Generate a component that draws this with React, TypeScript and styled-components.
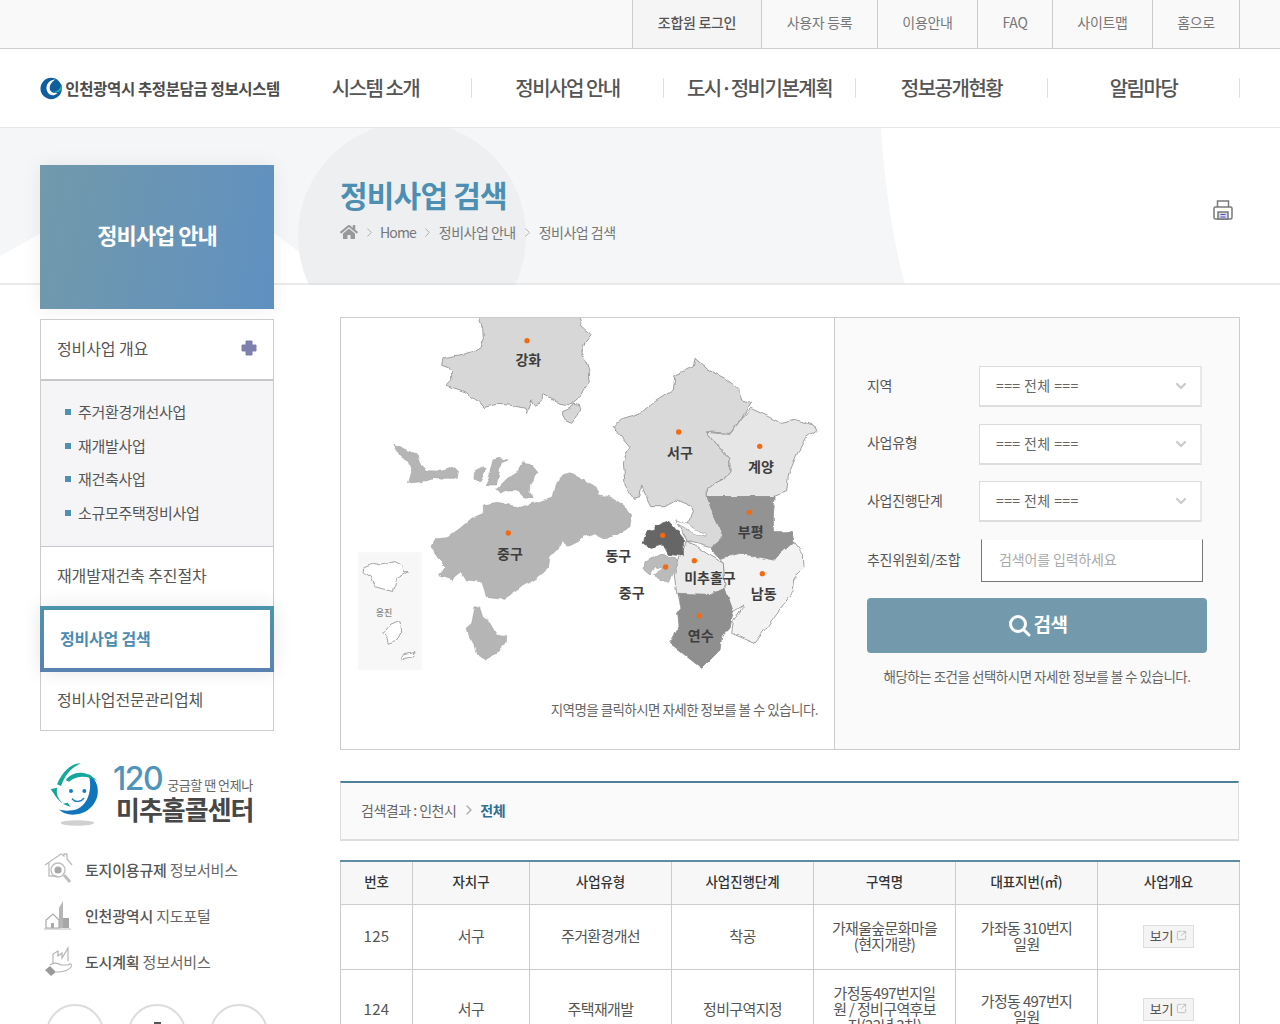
import React from 'react';
import styled, { createGlobalStyle } from 'styled-components';
import { ChevronDown, ChevronRight, SquareArrowOutUpRight } from 'lucide-react';
import { FaHome } from 'react-icons/fa';

const Global = createGlobalStyle`
  html, body { margin: 0; padding: 0; background: #fff; }
  * { box-sizing: border-box; }
  body { font-family: "Noto Sans CJK KR", "Noto Sans", sans-serif; color: #555; }
`;

const Page = styled.div`
  width: 1280px; height: 1024px; overflow: hidden; background: #fff;
`;
const TopBar = styled.div`
  height: 49px; background: #f9f9f9; border-bottom: 1px solid #ccc;
  display: flex; justify-content: flex-end; padding-right: 40px;
`;
const TopLink = styled.a<{ $w: number; $active?: boolean }>`
  width: ${p => p.$w}px; display: flex; align-items: center; justify-content: center; padding-bottom: 4px;
  border-left: 1px solid #ccc; font-size: 14px; letter-spacing: -0.3px;
  color: ${p => (p.$active ? '#555' : '#777')}; font-weight: ${p => (p.$active ? 500 : 400)};
  background: ${p => (p.$active ? '#f5f5f5' : 'transparent')};
  &:last-child { border-right: 1px solid #ccc; }
`;
const Header = styled.div`
  height: 79px; display: flex; align-items: center; padding: 0 40px;
  border-bottom: 1px solid #e8e8e8; background: #fff;
`;
const Brand = styled.div`
  width: 240px; display: flex; align-items: center; gap: 2px; font-size: 15.5px; font-weight: 700;
  letter-spacing: -0.37px; color: #4c4c4c; white-space: nowrap;
`;
const Gnb = styled.nav`
  display: flex; flex: 1;
`;
const GnbItem = styled.a`
  width: 192px; height: 20px; line-height: 20px; text-align: center; font-size: 20px; font-weight: 500;
  letter-spacing: -1.5px; color: #555; border-right: 1px solid #ddd; white-space: nowrap;
`;
const Content = styled.div`
  position: relative; display: flex; gap: 66px; padding: 0 40px;
`;
const Backdrop = styled.svg`
  position: absolute; left: 0; top: 0; width: 1280px; height: 157px; z-index: 0;
`;
const Side = styled.aside`
  position: relative; z-index: 1; width: 234px; flex: none; padding-top: 37px;
`;
const SideTitle = styled.div`
  height: 144px; display: flex; align-items: center; justify-content: center; color: #fff;
  font-size: 22px; font-weight: 700; letter-spacing: -1px; padding-bottom: 7px;
  background: linear-gradient(100deg, #7299ab, #5f90c0);
  box-shadow: 0 0 18px rgba(0, 0, 0, 0.07);
`;
const SideMenu = styled.div`
  margin-top: 10px; border: 1px solid #ccc; background: #fff;
`;
const MenuItem = styled.div`
  height: 59px; display: flex; align-items: center; justify-content: space-between; padding: 0 16px 4px;
  font-size: 16px; letter-spacing: -0.1px; color: #555;
`;
const LastItem = styled(MenuItem)`
  height: 58px; padding-bottom: 4px;
`;
const SubList = styled.ul`
  list-style: none; margin: 0; padding: 14px 24px 17px; background: #f5f5f7;
  border-top: 2px solid #c8c8cc; border-bottom: 1px solid #c8c8cc; height: 168px;
`;
const SubItem = styled.li`
  height: 33.6px; display: flex; align-items: center; gap: 7px; font-size: 15px; letter-spacing: -0.3px; color: #555;
  &::before { content: ''; width: 6px; height: 6px; background: #4f8fb0; margin-top: 1px; }
`;
const ActiveItem = styled.div`
  height: 66px; margin: 0 -1px; border: 4px solid; border-image: linear-gradient(#4d93ac, #5a82b0) 1;
  display: flex; align-items: center; padding-left: 16px; padding-bottom: 2px; font-size: 16px; font-weight: 700; letter-spacing: -0.2px;
  color: #4b8cb3; background: #fff; box-shadow: 0 0 18px rgba(0, 0, 0, 0.1); position: relative;
`;
const CallBox = styled.div`
  display: flex; gap: 11px; margin: 30px 0 0 8px; height: 66px;
`;
const CallText = styled.div`
  display: flex; flex-direction: column;
`;
const CallTop = styled.div`
  display: flex; align-items: baseline; gap: 5px; height: 33px; line-height: 1; padding-top: 2px;
  font-size: 13px; letter-spacing: -0.45px; color: #666;
`;
const CallNum = styled.span`
  font-size: 32px; font-weight: 500; color: #4f94bb; letter-spacing: -1.5px; font-family: "Inter", sans-serif;
`;
const CallName = styled.div`
  margin-left: 3px; font-size: 26px; line-height: 30px; font-weight: 700; letter-spacing: -1px; color: #474747; white-space: nowrap;
`;
const ServiceList = styled.div`
  margin: 27px 0 0 4px; display: flex; flex-direction: column; gap: 16px;
`;
const Service = styled.div`
  height: 30px; display: flex; align-items: center; gap: 9px; font-size: 15px; letter-spacing: -0.2px; color: #666; white-space: nowrap;
  b { font-weight: 500; color: #555; }
`;
const Circles = styled.div`
  display: flex; gap: 24px; margin: 28px 0 0 6px;
`;
const Circle = styled.div`
  width: 58px; height: 58px; border: 2px solid #ddd; border-radius: 50%; display: flex; justify-content: center; padding-top: 16px;
`;
const CircleMark = styled.span`
  width: 7px; height: 2px; background: #555;
`;
const Main = styled.main`
  position: relative; z-index: 1; width: 900px;
`;
const Head = styled.div`
  height: 189px; position: relative; padding-top: 43px;
`;
const Title = styled.h2`
  margin: 0; font-size: 30px; line-height: 46px; font-weight: 700; letter-spacing: -0.8px; color: #4c8fb3;
`;
const Crumbs = styled.div`
  margin-top: 3px; display: flex; align-items: center; gap: 4px; font-size: 14px; letter-spacing: -0.5px; color: #777; height: 24px;
  svg { color: #999; flex: none; }
`;
const HomeText = styled.span`
  margin-left: -1px; letter-spacing: -0.9px;
`;
const Print = styled.svg`
  position: absolute; right: 7px; top: 71px; width: 20px; height: 22px;
`;
const SearchPanel = styled.section`
  display: flex; height: 433px; border: 1px solid #ccc;
`;
const MapArea = styled.div`
  width: 494px; position: relative; border-right: 1px solid #ccc; background: #fff; overflow: hidden;
`;
const MapSvg = styled.svg`
  position: absolute; left: -1px; top: -3px; width: 500px; height: 440px;
  pointer-events: none;
`;
const MapNote = styled.p`
  position: absolute; right: 16px; top: 381px; margin: 0; font-size: 13.5px; letter-spacing: -0.55px; color: #666;
`;
const FormArea = styled.div`
  flex: 1; background: #fafafa; padding: 48px 32px 0;
`;
const Row = styled.div`
  display: flex; align-items: center; margin-bottom: 16.6px; font-size: 14px; letter-spacing: -0.3px; color: #555;
`;
const Label = styled.label`
  width: 112px; flex: none; padding-bottom: 3.5px;
`;
const SelectBox = styled.div`
  position: relative; width: 223px; height: 41px; color: #ccc;
  svg { position: absolute; right: 13px; top: 12px; }
`;
const Select = styled.select`
  appearance: none; width: 100%; height: 100%; padding: 0 0 2px 16px; font: inherit; font-size: 14px; letter-spacing: 0.4px; color: #666;
  background: #fff; border: 1px solid #dcdcdc; border-bottom: 2px solid #ddd; border-right: 2px solid #e8e8e8; border-radius: 0;
`;
const Input = styled.input`
  width: 222px; height: 43px; margin-left: 2px; padding: 0 0 3px 17px; font: inherit; font-size: 14px; letter-spacing: -0.15px; background: #fff;
  border: 1px solid #777; border-top-color: #f8f8f8; border-radius: 0;
  &::placeholder { color: #aaa; opacity: 1; }
`;
const SearchBtn = styled.button`
  width: 340px; height: 54.6px; border: 0; border-radius: 4px; background: #7299ac; color: #fff; font: inherit;
  font-size: 19px; font-weight: 700; letter-spacing: -0.6px; display: flex; align-items: center; justify-content: center; gap: 3px; padding-bottom: 2px;
  span { position: relative; top: -2px; }
`;
const FormNote = styled.p`
  margin: 13px 0 0; width: 340px; text-align: center; font-size: 13.5px; letter-spacing: -0.5px; color: #666;
`;
const ResultBar = styled.div`
  margin-top: 31px; height: 60px; width: 899px; border: 1px solid #ddd; border-top: 2px solid #4f8099; border-bottom-width: 2px; background: #fafafa;
  display: flex; align-items: center; padding: 0 20px 3px; font-size: 14px; letter-spacing: -0.5px; color: #666; gap: 5px;
  svg { color: #aaa; }
  b { color: #2f6f92; font-weight: 700; margin-left: -2px; }
`;
const Table = styled.table`
  margin-top: 19px; width: 899px; table-layout: fixed; border-collapse: collapse; border-top: 2px solid #5e8ca3;
`;
const Th = styled.th`
  height: 43px; padding: 0 0 3px; background: #f7f7f7; border: 1px solid #ccc; border-top: 0; font-size: 13.5px; font-weight: 500; color: #333; letter-spacing: -0.1px;
`;
const Td = styled.td`
  padding: 15px 17px 17px; border: 1px solid #ccc; text-align: center; font-size: 15px; line-height: 16px; letter-spacing: -0.65px; color: #555; background: #fff;
`;
const NumCell = styled(Td)`
  letter-spacing: 0.3px; padding-left: 0; padding-right: 0;
`;
const BtnCell = styled(Td)`
  padding: 16px 0;
`;
const ViewBtn = styled.a`
  width: 51px; height: 23px; margin: 0 auto; display: flex; align-items: center; justify-content: center; gap: 3px;
  background: #f4f4f4; border: 1px solid #ddd; font-size: 13px; color: #555; letter-spacing: -0.3px; padding-bottom: 2px;
  svg { color: #bbb; }
`;

const Sym = () => (
  <svg width="24" height="25" viewBox="0 0 24 25">
    <circle cx="11.5" cy="12.5" r="11" fill="#0f5f9f" />
    <path d="M16 3 C7 4 4 12 9 18 C11 20 15 20 18 17 C14 18 10 16 10 12 C10 8 13 5 16 3Z" fill="#fff" />
    <path d="M22 8 C21 13 18 16 13 16 C16 18 21 16 23 12Z" fill="#2aa7b5" />
  </svg>
);

const CallLogo = () => (
  <svg width="54" height="66" viewBox="0 0 156 198" style={{ flex: 'none' }}>
    <ellipse cx="85" cy="186" rx="50" ry="8" fill="#d0d0d0" />
    <path d="M30 145 C55 175 135 165 146 100 C150 70 135 50 118 38 C132 80 120 140 70 148 C55 150 42 150 30 145Z" fill="#1175bc" />
    <path d="M5 85 C25 110 25 125 65 138 L56 125 L42 128 C25 110 22 100 24 80 Z" fill="#10a59a" />
    <path d="M24 70 C40 30 70 5 95 8 C75 15 50 35 36 75Z" fill="#12a99a" />
    <path d="M50 58 C70 30 110 25 145 60 C120 45 85 40 60 62Z" fill="#14a79d" />
    <circle cx="66" cy="90" r="6" fill="#1b7cc0" />
    <circle cx="106" cy="90" r="6" fill="#1b7cc0" />
    <path d="M70 114 C78 124 95 124 104 112" stroke="#1b7cc0" strokeWidth="4" fill="none" strokeLinecap="round" />
  </svg>
);

const IconSearchHouse = () => (
  <svg width="32" height="32" viewBox="0 0 32 32" fill="none" stroke="#bdbdbd" strokeWidth="1.3">
    <path d="M1 12 L17 1 L20 3 V1 H23 V6 L28 12 M5 10 V23 H13" />
    <circle cx="14" cy="17" r="7" />
    <circle cx="14" cy="17" r="3.6" fill="#a8a8a8" stroke="none" />
    <path d="M20 22 L26 29" strokeWidth="3" />
  </svg>
);
const IconCity = () => (
  <svg width="28" height="30" viewBox="0 0 28 30">
    <path d="M15 28 V8 L19 1 V28Z" fill="#b5b5b5" />
    <path d="M19 28 V18 H25 V28Z" fill="#a5a5a5" />
    <path d="M2 28 V20 L9 14 L15 20 V28Z" fill="#fff" stroke="#aaa" strokeWidth="1.2" />
    <rect x="7" y="23" width="3" height="5" fill="#aaa" />
    <path d="M0 29 H27" stroke="#bbb" />
  </svg>
);
const IconHand = () => (
  <svg width="30" height="30" viewBox="0 0 30 30" fill="none" stroke="#b5b5b5" strokeWidth="1.2">
    <path d="M9 17 V8 L14 5 V10 L18 7 V12 L24 2 V15" />
    <path d="M6 19 C10 16 14 17 17 19 L24 19 C27 17 28 18 27 21 C24 25 18 26 12 26" />
    <path d="M1 24 L6 20 L12 26 L7 30Z" fill="#999" stroke="none" />
  </svg>
);

const Dot = ({ x, y }: { x: number; y: number }) => <circle cx={x} cy={y} r="8" fill="#f26a12" />;
const MapLabel = ({ x, y, t }: { x: number; y: number; t: string }) => (
  <text x={x} y={y} textAnchor="middle" fontSize="42" fontWeight="700" fill="#3d3d3d" fontFamily='"Noto Sans CJK KR", sans-serif'>{t}</text>
);
const edge = { stroke: '#8f8f8f', strokeWidth: 2.5, strokeLinejoin: 'round' as const };

const IncheonMap = () => (
  <MapSvg viewBox="0 0 1500 1320">
    <defs>
      <filter id="coast" x="-5%" y="-5%" width="110%" height="110%">
        <feTurbulence type="fractalNoise" baseFrequency="0.035" numOctaves="2" seed="4" result="n" />
        <feDisplacementMap in="SourceGraphic" in2="n" scale="14" xChannelSelector="R" yChannelSelector="G" />
      </filter>
    </defs>
    <g filter="url(#coast)">
      <g {...edge} fill="#d7d7d7">
        <path d="M415 0 L715 0 L725 35 L755 60 L735 85 L725 110 L735 130 L748 170 L750 200 L740 215 L720 245 L690 270 L660 265 L610 238 L610 255 L585 272 L572 255 L560 295 L555 280 L510 270 L470 268 L430 278 L415 260 L375 230 L345 220 L320 210 L335 195 L335 170 L325 155 L305 148 L310 128 L340 122 L370 118 L400 108 L420 95 L430 70 L428 40Z" />
        <path d="M668 290 L690 280 L700 265 L718 268 L722 285 L710 305 L695 325 L678 318 L668 300Z" />
      </g>
      <g fill="#b5b5b5" stroke="#a0a0a0" strokeWidth="1.5">
        <path d="M158 388 L185 395 L215 415 L235 420 L245 450 L262 467 L300 468 L345 458 L356 470 L352 490 L310 490 L280 488 L240 500 L205 505 L215 470 L205 440 L180 425Z" />
        <path d="M403 470 L430 455 L437 462 L428 485 L420 497 L402 492Z" />
        <path d="M455 435 L475 430 L505 435 L480 445 L478 470 L470 510 L435 510 L450 480 L450 455Z" />
        <path d="M470 525 L505 490 L535 470 L545 440 L570 445 L592 470 L570 505 L568 530 L580 548 L555 550 L530 525 L500 525 L480 535Z" />
        <path d="M430 570 L470 562 L540 577 L640 545 C645 510 655 480 690 473 L720 490 L765 515 L775 540 L810 545 L850 570 L875 600 L870 635 L830 660 L790 670 L760 655 L730 665 L715 680 L680 697 L665 672 L655 700 L630 725 L625 760 L590 790 L540 820 L495 850 L440 845 L425 800 L380 795 L365 770 L335 795 L295 782 L320 755 L290 725 L273 695 L285 668 L325 665 L360 640 L395 610 L430 595Z" />
        <path d="M405 875 L420 880 L428 905 L450 925 L470 960 L497 965 L495 985 L470 1010 L440 1035 L410 1020 L400 985 L378 940 L395 925Z" />
      </g>
    </g>
    <rect x="55" y="712" width="190" height="353" fill="#f7f7f7" />
    <g fill="#fff" stroke="#777" strokeWidth="2" filter="url(#coast)">
      <path d="M75 755 L100 745 L125 750 L165 740 L185 750 L190 770 L205 770 L170 790 L160 830 L140 825 L105 815 L90 785 L72 770Z" />
      <path d="M130 955 L150 930 L180 920 L185 945 L170 975 L145 985 L140 965Z" />
      <path d="M185 1030 L195 1015 L225 1010 L222 1025 L195 1030 L187 1037Z" />
    </g>
    <g {...edge} filter="url(#coast)">
      <path fill="#d9d9d9" d="M1065 130 L1105 165 L1155 190 L1195 220 L1205 255 L1232 262 L1205 310 L1170 355 L1100 350 L1125 385 L1170 430 L1170 470 L1150 495 L1102 520 L1102 545 L1120 600 L1150 660 L1135 680 L1115 695 L1040 675 L1005 615 L1040 630 L1060 590 L1055 575 L1010 555 L975 575 L935 575 L920 545 L905 510 L900 545 L880 550 L855 510 L850 440 L870 395 L820 335 L850 310 L900 295 L945 260 L1000 225 L1005 180 L1060 155Z" />
      <path fill="#fff" stroke="#aaa" d="M1005 615 L1045 628 L1097 660 L1092 666 L1040 645 L1008 625Z" />
      <path fill="#e6e6e6" d="M1232 280 L1275 300 L1325 325 L1370 315 L1420 330 L1430 345 L1395 370 L1370 420 L1345 480 L1340 530 L1300 545 L1102 545 L1102 520 L1150 495 L1170 470 L1170 430 L1125 385 L1100 352 L1170 358 L1205 310Z" />
      <path fill="#939393" d="M1102 545 L1305 545 L1300 600 L1300 650 L1355 650 L1362 680 L1300 735 L1200 715 L1140 730 L1115 705 L1115 695 L1150 665 L1120 600Z" />
      <path fill="#f3f3f3" d="M1140 730 L1200 715 L1300 735 L1362 680 L1390 715 L1392 760 L1365 785 L1360 830 L1310 895 L1245 985 L1175 955 L1180 920 L1212 870 L1180 890 L1155 825 L1150 745Z" />
      <path fill="#8f8f8f" d="M1010 835 L1110 838 L1155 820 L1180 890 L1170 940 L1145 965 L1140 1005 L1085 1060 L990 985 L1015 940 L1010 895 L1020 880Z" />
      <path fill="#ebebeb" d="M1040 675 L1100 715 L1150 745 L1155 820 L1110 838 L1010 835 L1003 780 L1020 725Z" />
      <path fill="#666" stroke="#666" d="M945 632 L985 618 L1005 640 L1030 670 L1030 722 L985 718 L970 690 L930 700 L910 685 L920 650 L945 645Z" />
      <path fill="#bbb" stroke="#aaa" d="M915 740 L960 720 L1010 728 L1015 745 L985 805 L940 780 L970 760 L945 755 L930 780 L912 765Z" />
    </g>
    <Dot x={561} y={77} /><Dot x={1016} y={351} /><Dot x={1259} y={394} /><Dot x={1228} y={592} /><Dot x={505} y={654} />
    <Dot x={968} y={661} /><Dot x={977} y={756} /><Dot x={1063} y={737} /><Dot x={1267} y={776} /><Dot x={1078} y={902} />
    <MapLabel x={565} y={149} t="강화" /><MapLabel x={1020} y={428} t="서구" /><MapLabel x={1263} y={471} t="계양" />
    <MapLabel x={1232} y={666} t="부평" /><MapLabel x={510} y={731} t="중구" /><MapLabel x={835} y={737} t="동구" />
    <MapLabel x={875} y={848} t="중구" /><MapLabel x={1110} y={804} t="미추홀구" /><MapLabel x={1271} y={853} t="남동" />
    <MapLabel x={1082} y={978} t="연수" />
    <text x="132" y="902" textAnchor="middle" fontSize="27" fontWeight="500" fill="#888" fontFamily='"Noto Sans CJK KR", sans-serif'>옹진</text>
  </MapSvg>
);

const cols = [72, 117, 142, 142, 142, 142, 142];
const heads = ['번호', '자치구', '사업유형', '사업진행단계', '구역명', '대표지번(㎡)', '사업개요'];
const rows = [
  ['125', '서구', '주거환경개선', '착공', '가재울숲문화마을 (현지개량)', '가좌동 310번지 일원'],
  ['124', '서구', '주택재개발', '정비구역지정', '가정동497번지일원 / 정비구역후보지(22년 3차)', '가정동 497번지 일원'],
];

export default function App() {
  return (
    <Page>
      <Global />
      <TopBar>
        <TopLink $w={129} $active>조합원 로그인</TopLink>
        <TopLink $w={116}>사용자 등록</TopLink>
        <TopLink $w={100}>이용안내</TopLink>
        <TopLink $w={75}>FAQ</TopLink>
        <TopLink $w={100}>사이트맵</TopLink>
        <TopLink $w={88}>홈으로</TopLink>
      </TopBar>
      <Header>
        <Brand><Sym />인천광역시 추정분담금 정보시스템</Brand>
        <Gnb>
          <GnbItem>시스템 소개</GnbItem>
          <GnbItem>정비사업 안내</GnbItem>
          <GnbItem>도시·정비기본계획</GnbItem>
          <GnbItem>정보공개현황</GnbItem>
          <GnbItem>알림마당</GnbItem>
        </Gnb>
      </Header>
      <Content>
        <Backdrop viewBox="0 0 1280 157">
          <path d="M0 0 H881 C884 50 892 110 905 156 H0Z" fill="#f5f6f8" />
          <path d="M0 128 C60 95 140 45 210 55 L300 125 L330 156 H0Z" fill="#fff" opacity="0.92" />
          <circle cx="412" cy="108" r="114" fill="#edeff1" />
          <path d="M0 156 H1280" stroke="#d8d8d8" strokeWidth="1" />
        </Backdrop>
        <Side>
          <SideTitle>정비사업 안내</SideTitle>
          <SideMenu>
            <MenuItem>
              정비사업 개요
              <svg width="16" height="16" viewBox="0 0 16 16"><path d="M5 1 H11 V5 H15 V11 H11 V15 H5 V11 H1 V5 H5Z" fill="#7f80ae" stroke="#7f80ae" strokeLinejoin="round" /></svg>
            </MenuItem>
            <SubList>
              <SubItem>주거환경개선사업</SubItem>
              <SubItem>재개발사업</SubItem>
              <SubItem>재건축사업</SubItem>
              <SubItem>소규모주택정비사업</SubItem>
            </SubList>
            <MenuItem>재개발재건축 추진절차</MenuItem>
            <ActiveItem>정비사업 검색</ActiveItem>
            <LastItem>정비사업전문관리업체</LastItem>
          </SideMenu>
          <CallBox>
            <CallLogo />
            <CallText>
              <CallTop><CallNum>120</CallNum>궁금할 땐 언제나</CallTop>
              <CallName>미추홀콜센터</CallName>
            </CallText>
          </CallBox>
          <ServiceList>
            <Service><IconSearchHouse /><span><b>토지이용규제</b> 정보서비스</span></Service>
            <Service><IconCity /><span style={{ marginLeft: 4 }}><b>인천광역시</b> 지도포털</span></Service>
            <Service><IconHand /><span style={{ marginLeft: 2 }}><b>도시계획</b> 정보서비스</span></Service>
          </ServiceList>
          <Circles>
            <Circle />
            <Circle><CircleMark /></Circle>
            <Circle />
          </Circles>
        </Side>
        <Main>
          <Head>
            <Title>정비사업 검색</Title>
            <Crumbs>
              <FaHome size={18} />
              <ChevronRight size={15} strokeWidth={1.2} />
              <HomeText>Home</HomeText>
              <ChevronRight size={15} strokeWidth={1.2} />
              <span>정비사업 안내</span>
              <ChevronRight size={15} strokeWidth={1.2} />
              <span>정비사업 검색</span>
            </Crumbs>
            <Print viewBox="0 0 20 22" fill="none" stroke="#7a7a7a" strokeWidth="1.5">
              <path d="M4.5 8 V2 H15.5 V8" />
              <rect x="1" y="8" width="18" height="12" rx="1.5" />
              <rect x="5" y="13" width="10" height="7" fill="#d8d8ea" stroke="#7a7a7a" />
              <path d="M7.5 15.5 H12.5 M7.5 18 H12.5" stroke="#5050c0" strokeWidth="1" />
            </Print>
          </Head>
          <SearchPanel>
            <MapArea>
              <IncheonMap />
              <MapNote>지역명을 클릭하시면 자세한 정보를 볼 수 있습니다.</MapNote>
            </MapArea>
            <FormArea>
              {['지역', '사업유형', '사업진행단계'].map(l => (
                <Row key={l}>
                  <Label>{l}</Label>
                  <SelectBox>
                    <Select defaultValue="all"><option value="all">=== 전체 ===</option></Select>
                    <ChevronDown size={16} strokeWidth={3.5} />
                  </SelectBox>
                </Row>
              ))}
              <Row>
                <Label>추진위원회/조합</Label>
                <Input placeholder="검색어를 입력하세요" />
              </Row>
              <SearchBtn>
                <svg width="24" height="24" viewBox="0 0 24 24" fill="none" stroke="#fff" strokeWidth="3"><circle cx="11" cy="11" r="7.5" /><path d="M16.5 16.5 L22 22" strokeLinecap="round" /></svg>
                <span>검색</span>
              </SearchBtn>
              <FormNote>해당하는 조건을 선택하시면 자세한 정보를 볼 수 있습니다.</FormNote>
            </FormArea>
          </SearchPanel>
          <ResultBar>
            검색결과 : 인천시 <ChevronRight size={16} strokeWidth={2} /> <b>전체</b>
          </ResultBar>
          <Table>
            <colgroup>{cols.map((w, i) => <col key={i} style={{ width: w }} />)}</colgroup>
            <thead><tr>{heads.map(h => <Th key={h}>{h}</Th>)}</tr></thead>
            <tbody>
              {rows.map(r => (
                <tr key={r[0]}>
                  <NumCell>{r[0]}</NumCell>
                  {r.slice(1).map((c, i) => <Td key={i}>{c}</Td>)}
                  <BtnCell><ViewBtn>보기<SquareArrowOutUpRight size={11} /></ViewBtn></BtnCell>
                </tr>
              ))}
            </tbody>
          </Table>
        </Main>
      </Content>
    </Page>
  );
}
